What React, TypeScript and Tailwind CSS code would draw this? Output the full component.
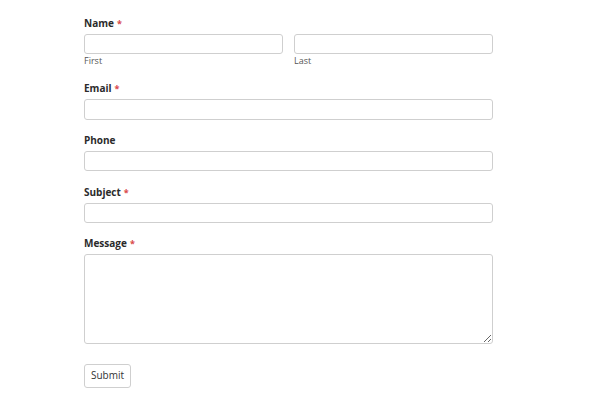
import React from "react";

const font = { fontFamily: '"Open Sans", "Liberation Sans", sans-serif' };

function Label({ text, required }: { text: string; required?: boolean }) {
  return (
    <div className="h-[16px] mb-[3px] text-[10px] leading-[16px] font-bold text-[#2b2b2b]">
      {text}
      {required && <span className="text-[#d9474a] font-bold ml-[3px] text-[9px]">*</span>}
    </div>
  );
}

const inputCls =
  "block w-full h-[20px] border border-[#cfcfcf] rounded-[3px] bg-white outline-none";

export default function App() {
  return (
    <div className="w-[600px] h-[400px] bg-white" style={font}>
      <div className="pl-[84px] pt-[15px] w-[493px]">
        <div>
          <Label text="Name" required />
          <div className="flex gap-[11px]">
            <div className="flex-1">
              <input className={inputCls} />
              <div className="text-[9px] leading-[12px] text-[#555] mt-[1px]">First</div>
            </div>
            <div className="flex-1">
              <input className={inputCls} />
              <div className="text-[9px] leading-[12px] text-[#555] mt-[1px]">Last</div>
            </div>
          </div>
        </div>
        <div className="mt-[13px]">
          <Label text="Email" required />
          <input className={inputCls + " !h-[21px]"} />
        </div>
        <div className="mt-[12px]">
          <Label text="Phone" />
          <input className={inputCls} />
        </div>
        <div className="mt-[13px]">
          <Label text="Subject" required />
          <input className={inputCls} />
        </div>
        <div className="mt-[12px]">
          <Label text="Message" required />
          <textarea className="block w-full h-[90px] border border-[#cfcfcf] rounded-[3px] bg-white outline-none resize-y" />
        </div>
        <div className="mt-[17px]">
          <button className="h-[24px] px-[6px] border border-[#cfcfcf] rounded-[3px] bg-white text-[10px] text-[#333]">
            Submit
          </button>
        </div>
      </div>
    </div>
  );
}
